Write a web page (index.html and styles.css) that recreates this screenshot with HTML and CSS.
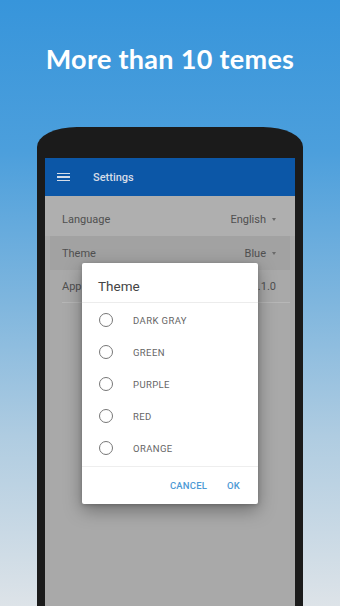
FILE: index.html
```html
<!DOCTYPE html>
<html>
<head>
<title>Themes</title>
<meta charset="utf-8"/>
<link rel="stylesheet" href="styles.css">
</head>
<body>

<h1 class="promo">More than 10 temes</h1>

<div class="phone">
  <div class="screen">
    <div class="toolbar">
      <span class="burger"><i></i><i></i><i></i></span>
      <span class="toolbar-title">Settings</span>
    </div>

    <ul class="prefs">
      <li class="pref">
        <span>Language</span>
        <span class="pref-value">English<b class="caret"></b></span>
      </li>
      <li class="pref pressed">
        <span>Theme</span>
        <span class="pref-value">Blue<b class="caret"></b></span>
      </li>
      <li class="pref last">
        <span>App</span>
        <span class="pref-value">1.1.0</span>
      </li>
    </ul>

    <div class="dialog">
      <div class="dialog-title">Theme</div>
      <ul class="options">
        <li><span class="radio"></span>DARK GRAY</li>
        <li><span class="radio"></span>GREEN</li>
        <li><span class="radio"></span>PURPLE</li>
        <li><span class="radio"></span>RED</li>
        <li><span class="radio"></span>ORANGE</li>
      </ul>
      <div class="actions">
        <a class="btn" href="javascript:;">CANCEL</a>
        <a class="btn" href="javascript:;">OK</a>
      </div>
    </div>
  </div>
</div>

</body>
</html>
```

FILE: styles.css
```css
html, body { margin:0; padding:0; }
body {
    width:340px;
    height:606px;
    overflow:hidden;
    font-family: Roboto, "Noto Sans", sans-serif;
    background: linear-gradient(180deg, #3795db 0%, #4c9fdc 25%, #7fb6de 50%, #afcce1 72%, #dde3e8 100%);
}
ul { list-style:none; margin:0; padding:0; }

.promo {
    margin:0;
    padding-top:43px;
    line-height:32px;
    text-align:center;
    color:#fff;
    font-family: Lato, "Open Sans", sans-serif;
    font-weight:700;
    font-size:27px;
    letter-spacing:0.3px;
}

.phone {
    box-sizing:border-box;
    width:266px;
    height:479px;
    margin:52px 0 0 37px;
    padding:31px 8px 0;
    background:#1b1b1b;
    border-radius:40px 40px 0 0 / 20px 20px 0 0;
}
.screen {
    position:relative;
    height:448px;
    background:#a9a9a9;
}

.toolbar {
    display:flex;
    align-items:center;
    height:38px;
    padding-left:12px;
    background:#0c57a7;
}
.burger { display:flex; flex-direction:column; gap:2px; width:13px; }
.burger i { display:block; height:1.5px; background:#d5dde8; }
.toolbar-title {
    margin-left:23px;
    font-size:11px;
    font-weight:500;
    color:#d6dde7;
}

.prefs { padding:7px 5px 0; background:linear-gradient(#afafaf, #afafaf 40px, #a9a9a9 40px); }
.pref {
    display:flex;
    justify-content:space-between;
    align-items:center;
    height:33px;
    padding:0 14px 0 12px;
    font-size:11px;
    color:#505050;
}
.pref.pressed { background:#a2a2a2; height:34px; }
.pref.last {
    margin-left:12px;
    padding-left:0;
    border-bottom:1px solid #b7b7b7;
    height:32px;
}
.pref-value { display:flex; align-items:center; }
.caret {
    margin-left:6px;
    border-left:2.5px solid transparent;
    border-right:2.5px solid transparent;
    border-top:3px solid #6a6a6a;
}

.dialog {
    position:absolute;
    left:37px;
    top:105px;
    width:176px;
    height:241px;
    background:#fff;
    border-radius:2px;
    box-shadow:0 6px 18px rgba(0,0,0,.35), 0 1px 4px rgba(0,0,0,.2);
}
.dialog-title {
    height:34px;
    padding:5px 0 0 16px;
    line-height:36px;
    font-size:13.5px;
    color:#444;
    border-bottom:1px solid #ececec;
}
.options { padding:1px 0 2px; border-bottom:1px solid #eeeeee; }
.options li {
    display:flex;
    align-items:center;
    height:32px;
    padding-left:17px;
    font-size:9.5px;
    letter-spacing:0.4px;
    color:#666;
}
.radio {
    box-sizing:border-box;
    width:14px;
    height:14px;
    margin-right:20px;
    border:1.5px solid #777;
    border-radius:50%;
}
.actions {
    display:flex;
    justify-content:flex-end;
    align-items:center;
    gap:20px;
    height:37px;
    padding-right:18px;
}
.btn {
    font-size:9.5px;
    font-weight:500;
    letter-spacing:0.2px;
    color:#4d9ad5;
    text-decoration:none;
}
```
